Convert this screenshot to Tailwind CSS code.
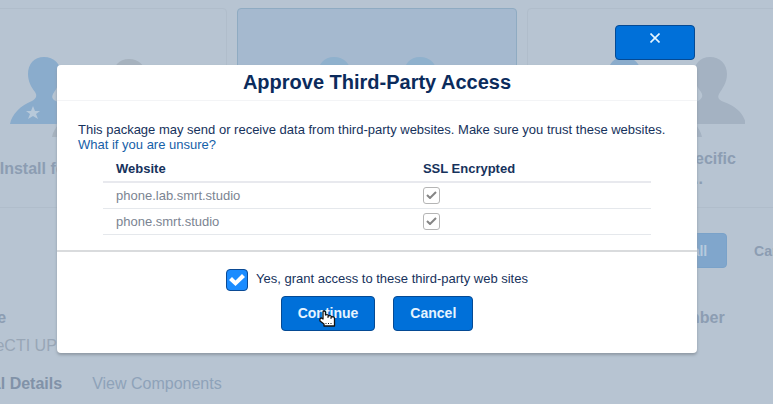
<!DOCTYPE html>
<html lang="en">

<head>
    <title>Install Package</title>
    <meta charset="utf-8">
    <meta name="viewport" content="width=device-width, initial-scale=1.0">
    <script src="https://cdn.jsdelivr.net/npm/@tailwindcss/browser@4"></script>
</head>

<body class="relative min-h-screen overflow-hidden bg-[#b7c4d2] font-['Liberation_Sans',Arial,sans-serif]">
    <svg class="hidden">
        <symbol id="person" viewBox="0 0 70 67">
            <path d="M34 0C44 0 51 7 51 17C51 26 46 32 43 37C41 41 43 43 48 45C60 49 68 57 70 67L0 67C2 57 10 49 22 44C27 41 27 38 25 35C21 30 18 24 18 17C18 7 24 0 34 0Z" />
        </symbol>
        <symbol id="tick" viewBox="0 0 16 12">
            <path d="M0 6L3 3L6.500 6.500L13 0L16 3L6.500 12Z" />
        </symbol>
        <symbol id="tick-thin" viewBox="0 0 11 8">
            <path d="M1 4L4 7L10 1" fill="none" stroke="#858585" stroke-width="2" />
        </symbol>
    </svg>

    <!-- install page -->
    <main class="flex flex-col items-center pt-2 pr-[19px] text-base leading-5 text-[#8c9db2]">
        <div class="flex justify-center gap-[10px]">
            <div class="flex h-[200px] w-[280px] shrink-0 flex-col items-center gap-3 rounded border border-[#b0bdcb] pt-12 text-center font-bold">
                <svg class="h-20 w-[156px]" viewBox="0 0 156 80">
                    <use href="#person" x="1" y="0" width="70" height="67" fill="#8aaccc" />
                    <use href="#person" x="86" y="2" width="70" height="67" fill="#a6b2be" />
                    <use href="#person" x="43" y="13" width="70" height="67" fill="#a6b2be" />
                    <path d="M24 49l2 5h5l-4 3 2 5-5-3-5 3 2-5-4-3h5z" fill="#b7c9da" />
                </svg>
                <h2 class="flex h-10 items-center">Install for Admins Only</h2>
            </div>
            <div class="flex h-[200px] w-[280px] shrink-0 flex-col items-center gap-3 rounded border border-[#8fabc2] bg-[#a5b9cf] pt-12 text-center font-bold">
                <svg class="h-20 w-[156px]" viewBox="0 0 156 80" fill="#8fb1cd">
                    <use href="#person" x="1" y="0" width="70" height="67" />
                    <use href="#person" x="87" y="0" width="70" height="67" />
                    <use href="#person" x="43" y="13" width="70" height="67" />
                </svg>
                <h2 class="flex h-10 items-center">Install for All Users</h2>
            </div>
            <div class="flex h-[200px] w-[280px] shrink-0 flex-col items-center gap-3 rounded border border-[#b0bdcb] pt-12 text-center font-bold">
                <svg class="h-20 w-[156px]" viewBox="0 0 156 80">
                    <use href="#person" x="1" y="0" width="70" height="67" fill="#8aaccc" />
                    <use href="#person" x="87" y="0" width="70" height="67" fill="#a4b2c2" />
                    <use href="#person" x="43" y="13" width="70" height="67" fill="#a4b2c2" />
                </svg>
                <h2 class="flex h-10 items-center">Install for Specific<br>Profiles...</h2>
            </div>
        </div>

        <div class="mt-[25px] flex w-[900px] shrink-0 justify-end text-sm font-bold">
            <button class="h-[35px] w-20 rounded border border-[#7aa2c9] bg-[#80a6cc] text-[#b7cadd]">Install</button>
            <button class="h-[35px] w-[100px]">Cancel</button>
        </div>

        <dl class="mt-10 grid w-[900px] shrink-0 grid-flow-col grid-cols-4 grid-rows-2 gap-y-2">
            <dt class="font-bold">App Name</dt>
            <dd class="text-[#98a6b6]">smrtPhoneCTI UP</dd>
            <dt class="font-bold">Publisher</dt>
            <dd></dd>
            <dt class="font-bold">Version Name</dt>
            <dd></dd>
            <dt class="font-bold">Version Number</dt>
            <dd></dd>
        </dl>

        <nav class="mt-[18px] flex w-[900px] shrink-0 gap-[30px]">
            <a href="#" class="font-bold text-[#8192a8]">Additional Details</a>
            <a href="#" class="text-[#8ea2b9]">View Components</a>
        </nav>
    </main>

    <!-- third-party access dialog -->
    <div class="absolute inset-0 flex items-start justify-center pt-[65px] pr-[19px]">
        <div role="dialog" aria-labelledby="dialog-title" class="relative w-full max-w-[640px] rounded bg-white text-[13px] leading-[15px] text-[#16325c] shadow-[0_2px_3px_#8f9aa5]">
            <button aria-label="Close" class="absolute -top-10 right-[2px] flex h-[35px] w-20 justify-center rounded border border-[#054a94] bg-[#0070d9] pt-[7px]">
                <svg class="h-[10px] w-[10px]" viewBox="0 0 10 10" stroke="#e6f6ff" stroke-width="1.6">
                    <path d="M0.500 0.500L9.500 9.500M9.500 0.500L0.500 9.500" />
                </svg>
            </button>

            <h1 id="dialog-title" class="border-b border-[#f3f4f6] pt-[5px] pb-[5px] text-center text-xl leading-[25px] font-bold text-[#0b2b5c]">Approve Third-Party Access</h1>

            <div class="border-b-2 border-[#d9dbdd] px-[21px] pt-[21px] pb-[15px]">
                <p>This package may send or receive data from third-party websites. Make sure you trust these websites.</p>
                <a href="#" class="block text-[#1560a8]">What if you are unsure?</a>

                <div class="px-[25px] pt-1">
                    <table class="w-full table-fixed text-left">
                        <thead>
                            <tr class="h-[26px] border-b-2 border-[#e8e9ee]">
                                <th class="w-[56%] px-[13px]">Website</th>
                                <th class="px-[13px]">SSL Encrypted</th>
                            </tr>
                        </thead>
                        <tbody class="text-[#7b8492]">
                            <tr class="h-[26px] border-b border-[#e5e8ec]">
                                <td class="px-[13px]">phone.lab.smrt.studio</td>
                                <td class="px-[13px]">
                                    <div class="grid w-[17px] place-items-center">
                                        <input type="checkbox" aria-label="phone.lab.smrt.studio SSL encrypted" checked disabled class="col-start-1 row-start-1 h-[17px] w-[17px] appearance-none rounded-[3px] border border-[#b5b5b5]">
                                        <svg class="col-start-1 row-start-1 h-2 w-[11px]"><use href="#tick-thin" /></svg>
                                    </div>
                                </td>
                            </tr>
                            <tr class="h-[26px] border-b border-[#e5e8ec]">
                                <td class="px-[13px]">phone.smrt.studio</td>
                                <td class="px-[13px]">
                                    <div class="grid w-[17px] place-items-center">
                                        <input type="checkbox" aria-label="phone.smrt.studio SSL encrypted" checked disabled class="col-start-1 row-start-1 h-[17px] w-[17px] appearance-none rounded-[3px] border border-[#b5b5b5]">
                                        <svg class="col-start-1 row-start-1 h-2 w-[11px]"><use href="#tick-thin" /></svg>
                                    </div>
                                </td>
                            </tr>
                        </tbody>
                    </table>
                </div>
            </div>

            <div class="flex flex-col items-center gap-[5px] pt-[17px] pb-[22px]">
                <div class="flex gap-2">
                    <div class="grid place-items-center">
                        <input type="checkbox" id="grant" checked class="col-start-1 row-start-1 h-[22px] w-[22px] appearance-none rounded border border-[#0b4a94] bg-[#1b8cff]">
                        <svg class="pointer-events-none col-start-1 row-start-1 h-3 w-4" fill="#fff"><use href="#tick" /></svg>
                    </div>
                    <label for="grant" class="pt-[2px]">Yes, grant access to these third-party web sites</label>
                </div>
                <div class="flex gap-[18px] text-sm font-bold text-[#e6f4ff]">
                    <button class="relative h-[35px] rounded border border-[#054a94] bg-[#0070d9] px-4">
                        Continue
                        <!-- hand pointer -->
                        <svg class="absolute top-[13px] left-[37px] h-[17px] w-[17px]" viewBox="0 0 17 17" fill="#fff" stroke="#111" stroke-width="1.3" stroke-linejoin="round">
                            <path d="M4 9L4 2Q4 1 5 1Q6.500 1 6.500 2L6.500 5Q9 4 9.500 6Q12 5 12.500 7Q15.500 6 15.500 9L15.500 16L5 16L5 14L1 11Q0.500 8 2.500 8Z" />
                            <path d="M9 6V8M12 7V9M7 13V14M9.500 13V14M12 13V14" stroke-width="1" fill="none" />
                        </svg>
                    </button>
                    <button class="h-[35px] rounded border border-[#054a94] bg-[#0070d9] px-4">Cancel</button>
                </div>
            </div>
        </div>
    </div>
</body>

</html>
